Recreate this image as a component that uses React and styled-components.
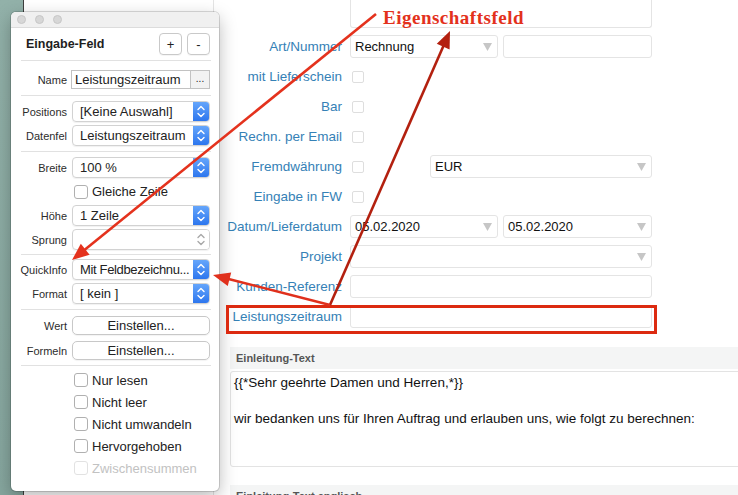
import React from "react";
import styled, { createGlobalStyle } from "styled-components";

const GlobalStyle = createGlobalStyle`
  html, body { margin: 0; padding: 0; }
  body {
    font-family: "Liberation Sans", Arial, sans-serif;
    overflow: hidden;
  }
`;

const Desktop = styled.div`
  position: relative;
  width: 738px;
  height: 495px;
  overflow: hidden;
  display: flex;
  background: linear-gradient(180deg, #92b1a9 0%, #86a69e 100%);
`;

const MainWindow = styled.div`
  margin-left: 23px;
  flex: 1;
  display: flex;
  background: #fff;
  border-left: 1px solid #3e3e3e;
  overflow: hidden;
`;

const Sidebar = styled.div`
  width: 189px;
  flex: none;
  border-right: 1px solid #e4e4e4;
`;

const Content = styled.div`
  flex: 1;
  min-width: 0;
  padding-left: 9px;
`;

const FieldGrid = styled.div`
  display: grid;
  grid-template-columns: 119px 302px;
  grid-template-rows: 28px;
  grid-auto-rows: 23px;
  column-gap: 8px;
  row-gap: 7px;
  align-items: center;
`;

const FieldLabel = styled.div`
  text-align: right;
  white-space: nowrap;
  font-size: 13.5px;
  color: #3581b6;
`;

const Field = styled.div`
  box-sizing: border-box;
  height: ${(p) => (p.$tall ? "28px" : "23px")};
  width: ${(p) => (p.$w ? `${p.$w}px` : "auto")};
  border: 1px solid #e4e4e4;
  border-top: ${(p) => (p.$tall ? "none" : "1px solid #e4e4e4")};
  border-radius: ${(p) => (p.$tall ? "0 0 3px 3px" : "3px")};
  display: flex;
  align-items: center;
  padding: 0 5px 0 4px;
  font-size: 13px;
  color: #111;
  background: #fff;
`;

const FieldText = styled.span`
  flex: 1;
`;

const Pair = styled.div`
  display: grid;
  grid-template-columns: 148px 149px;
  column-gap: 5px;
`;

const InlineRow = styled.div`
  display: flex;
  align-items: center;
  justify-content: space-between;
`;

const SmallCheck = styled.span`
  display: block;
  width: 12px;
  height: 12px;
  margin-left: 2px;
  box-sizing: border-box;
  border: 1px solid #dedede;
  border-radius: 2px;
`;

const Section = styled.section`
  margin: ${(p) => p.$mt}px -20px 0 7px;
`;

const SectionHead = styled.div`
  height: 22px;
  display: flex;
  align-items: center;
  padding-left: 6px;
  background: #f4f5f5;
  font-size: 11px;
  font-weight: bold;
  color: #555;
`;

const TextBox = styled.div`
  box-sizing: border-box;
  margin-top: 2px;
  height: 96px;
  border: 1px solid #e3e3e3;
  border-radius: 3px;
  padding: 2px 3px;
  font-size: 13.5px;
  line-height: 18px;
  color: #111;
`;

/* floating palette */

const Palette = styled.div`
  position: absolute;
  left: 11px;
  top: 12px;
  width: 208px;
  height: 479px;
  display: flex;
  flex-direction: column;
  background: #fff;
  border-radius: 5px;
  overflow: hidden;
  box-shadow: 0 0 0 1px rgba(0, 0, 0, 0.14), 0 6px 18px rgba(0, 0, 0, 0.28);
  color: #222;
`;

const TitleBar = styled.div`
  height: 15px;
  flex: none;
  display: flex;
  align-items: center;
  gap: 9px;
  padding-left: 6px;
  background: #f0f0f0;
  border-bottom: 1px solid #dcdcdc;
`;

const Light = styled.span`
  width: 9px;
  height: 9px;
  box-sizing: border-box;
  border-radius: 50%;
  background: #d7d7d7;
  border: 1px solid #c6c6c6;
`;

const PaletteHead = styled.div`
  height: 32px;
  flex: none;
  display: flex;
  align-items: center;
  padding: 0 9px 0 15px;
`;

const PaletteTitle = styled.div`
  font-size: 12.5px;
  font-weight: bold;
  color: #1e1e1e;
`;

const HeadButtons = styled.div`
  margin-left: auto;
  display: flex;
  gap: 5px;
`;

const SquareButton = styled.div`
  width: 23px;
  height: 22px;
  box-sizing: border-box;
  border: 1px solid #c9c9c9;
  border-radius: 4px;
  display: flex;
  align-items: center;
  justify-content: center;
  font-size: 13px;
  color: #222;
  box-shadow: 0 1px 0 rgba(0, 0, 0, 0.04);
`;

const Divider = styled.div`
  height: 1px;
  flex: none;
  margin: 0 8px 0 10px;
  background: #e1e1e1;
`;

const Group = styled.div`
  display: flex;
  flex-direction: column;
  gap: ${(p) => p.$gap || 0}px;
  padding: ${(p) => p.$pt}px 0 ${(p) => p.$pb}px;
`;

const PropRow = styled.div`
  display: grid;
  grid-template-columns: 56px 1fr;
  column-gap: 5px;
  padding-right: 9px;
  height: ${(p) => p.$h}px;
  align-items: center;
`;

const PropLabel = styled.div`
  text-align: right;
  font-size: 11px;
  color: #2c2c2c;
`;

const NameField = styled.div`
  display: flex;
  height: 19px;
  margin-left: -1px;
`;

const NameInput = styled.div`
  flex: 1;
  box-sizing: border-box;
  border: 1px solid #c2c2c2;
  padding-left: 3px;
  display: flex;
  align-items: center;
  font-size: 13px;
`;

const MoreButton = styled.div`
  width: 19px;
  box-sizing: border-box;
  border: 1px solid #c2c2c2;
  border-left: none;
  background: #f2f2f2;
  display: flex;
  align-items: center;
  justify-content: center;
  font-size: 10px;
  padding-bottom: 3px;
`;

const Popup = styled.div`
  height: 21px;
  box-sizing: border-box;
  display: flex;
  align-items: stretch;
  border: 1px solid #d2d2d2;
  border-radius: 4px;
  box-shadow: 0 1px 1px rgba(0, 0, 0, 0.06);
  overflow: hidden;
`;

const PopupText = styled.div`
  flex: 1;
  min-width: 0;
  display: flex;
  align-items: center;
  padding-left: 7px;
  font-size: 13px;
  letter-spacing: ${(p) => (p.$tight ? "-0.35px" : "0")};
  white-space: nowrap;
  overflow: hidden;
`;

const Stepper = styled.div`
  width: 16px;
  flex: none;
  display: flex;
  align-items: center;
  justify-content: center;
  background: ${(p) =>
    p.$disabled ? "#fff" : "linear-gradient(180deg, #65a6fb 0%, #2d76ee 100%)"};
`;

const PushButton = styled.div`
  height: 19px;
  box-sizing: border-box;
  border: 1px solid #c8c8c8;
  border-radius: 5px;
  display: flex;
  align-items: center;
  justify-content: center;
  font-size: 13px;
  box-shadow: 0 1px 1px rgba(0, 0, 0, 0.05);
`;

const CheckLine = styled.div`
  display: flex;
  align-items: center;
  gap: 4px;
  margin-left: 2px;
  font-size: 13px;
  color: ${(p) => (p.$disabled ? "#c2c2c2" : "#222")};
`;

const CheckBox = styled.span`
  width: 14px;
  height: 14px;
  box-sizing: border-box;
  border: 1px solid ${(p) => (p.$disabled ? "#e2e2e2" : "#b0b0b0")};
  border-radius: 3px;
  background: #fff;
`;

/* annotation layer */

const Overlay = styled.svg`
  position: absolute;
  left: 0;
  top: 0;
  pointer-events: none;
`;

const Callout = styled.div`
  position: absolute;
  left: 383px;
  top: 8px;
  font-family: "Liberation Serif", "Times New Roman", serif;
  font-weight: bold;
  font-size: 19px;
  line-height: 19px;
  letter-spacing: 0.5px;
  color: #e3311c;
`;

const Triangle = () => (
  <svg width="9" height="8" viewBox="0 0 9 8">
    <polygon points="0,0 9,0 4.5,8" fill="#c6c6c6" />
  </svg>
);

const Chevrons = ({ color }) => (
  <svg width="8" height="13" viewBox="0 0 8 13" fill="none" stroke={color} strokeWidth="1.4" strokeLinecap="round" strokeLinejoin="round">
    <polyline points="1,4.5 4,1.5 7,4.5" />
    <polyline points="1,8.5 4,11.5 7,8.5" />
  </svg>
);

const Select = ({ children, w }) => (
  <Field $w={w}>
    <FieldText>{children}</FieldText>
    <Triangle />
  </Field>
);

const PopupField = ({ children, disabled, tight }) => (
  <Popup>
    <PopupText $tight={tight}>{children}</PopupText>
    <Stepper $disabled={disabled}>
      <Chevrons color={disabled ? "#a8a8a8" : "#fff"} />
    </Stepper>
  </Popup>
);

const Arrow = ({ from, to, color, head = 17, half = 7, width = 2.6 }) => {
  const dx = to[0] - from[0];
  const dy = to[1] - from[1];
  const len = Math.hypot(dx, dy);
  const ux = dx / len;
  const uy = dy / len;
  const bx = to[0] - ux * head;
  const by = to[1] - uy * head;
  const pts = [
    to,
    [bx - uy * half, by + ux * half],
    [bx + uy * half, by - ux * half],
  ]
    .map((p) => p.join(","))
    .join(" ");
  return (
    <g>
      <line x1={from[0]} y1={from[1]} x2={bx + ux * 3} y2={by + uy * 3} stroke={color} strokeWidth={width} />
      <polygon points={pts} fill={color} />
    </g>
  );
};

const checks = [
  ["Nur lesen"],
  ["Nicht leer"],
  ["Nicht umwandeln"],
  ["Hervorgehoben"],
  ["Zwischensummen", true],
];

const App = () => {
  return (
    <Desktop>
      <GlobalStyle />
      <MainWindow>
        <Sidebar />
        <Content>
          <FieldGrid>
            <span />
            <Field $tall />

            <FieldLabel>Art/Nummer</FieldLabel>
            <Pair>
              <Select>Rechnung</Select>
              <Field />
            </Pair>

            <FieldLabel>mit Lieferschein</FieldLabel>
            <SmallCheck />

            <FieldLabel>Bar</FieldLabel>
            <SmallCheck />

            <FieldLabel>Rechn. per Email</FieldLabel>
            <SmallCheck />

            <FieldLabel>Fremdwährung</FieldLabel>
            <InlineRow>
              <SmallCheck />
              <Select w={222}>EUR</Select>
            </InlineRow>

            <FieldLabel>Eingabe in FW</FieldLabel>
            <SmallCheck />

            <FieldLabel>Datum/Lieferdatum</FieldLabel>
            <Pair>
              <Select>05.02.2020</Select>
              <Select>05.02.2020</Select>
            </Pair>

            <FieldLabel>Projekt</FieldLabel>
            <Select />

            <FieldLabel>Kunden-Referenz</FieldLabel>
            <Field />

            <FieldLabel>Leistungszeitraum</FieldLabel>
            <Field />
          </FieldGrid>

          <Section $mt={19}>
            <SectionHead>Einleitung-Text</SectionHead>
            <TextBox>
              {"{{*Sehr geehrte Damen und Herren,*}}"}
              <br />
              <br />
              wir bedanken uns für Ihren Auftrag und erlauben uns, wie folgt zu berechnen:
            </TextBox>
          </Section>

          <Section $mt={18}>
            <SectionHead>Einleitung-Text englisch</SectionHead>
          </Section>
        </Content>
      </MainWindow>

      <Palette>
        <TitleBar>
          <Light />
          <Light />
          <Light />
        </TitleBar>
        <PaletteHead>
          <PaletteTitle>Eingabe-Feld</PaletteTitle>
          <HeadButtons>
            <SquareButton>+</SquareButton>
            <SquareButton>-</SquareButton>
          </HeadButtons>
        </PaletteHead>
        <Divider />

        <Group $pt={9} $pb={6}>
          <PropRow $h={19}>
            <PropLabel>Name</PropLabel>
            <NameField>
              <NameInput>Leistungszeitraum</NameInput>
              <MoreButton>...</MoreButton>
            </NameField>
          </PropRow>
        </Group>
        <Divider />

        <Group $pt={5} $pb={5} $gap={3}>
          <PropRow $h={21}>
            <PropLabel>Positions</PropLabel>
            <PopupField>[Keine Auswahl]</PopupField>
          </PropRow>
          <PropRow $h={21}>
            <PropLabel>Datenfel</PropLabel>
            <PopupField>Leistungszeitraum</PopupField>
          </PropRow>
        </Group>
        <Divider />

        <Group $pt={5} $pb={4} $gap={3}>
          <PropRow $h={21}>
            <PropLabel>Breite</PropLabel>
            <PopupField>100 %</PopupField>
          </PropRow>
          <PropRow $h={21}>
            <span />
            <CheckLine>
              <CheckBox />
              Gleiche Zeile
            </CheckLine>
          </PropRow>
          <PropRow $h={21}>
            <PropLabel>Höhe</PropLabel>
            <PopupField>1 Zeile</PopupField>
          </PropRow>
          <PropRow $h={21}>
            <PropLabel>Sprung</PropLabel>
            <PopupField disabled />
          </PropRow>
        </Group>
        <Divider />

        <Group $pt={4} $pb={5} $gap={3}>
          <PropRow $h={21}>
            <PropLabel>QuickInfo</PropLabel>
            <PopupField tight>Mit Feldbezeichnu...</PopupField>
          </PropRow>
          <PropRow $h={21}>
            <PropLabel>Format</PropLabel>
            <PopupField>[ kein ]</PopupField>
          </PropRow>
        </Group>
        <Divider />

        <Group $pt={6} $pb={5} $gap={6}>
          <PropRow $h={19}>
            <PropLabel>Wert</PropLabel>
            <PushButton>Einstellen...</PushButton>
          </PropRow>
          <PropRow $h={19}>
            <PropLabel>Formeln</PropLabel>
            <PushButton>Einstellen...</PushButton>
          </PropRow>
        </Group>
        <Divider />

        <Group $pt={3} $pb={0}>
          {checks.map(([label, disabled]) => (
            <PropRow $h={22} key={label}>
              <span />
              <CheckLine $disabled={disabled}>
                <CheckBox $disabled={disabled} />
                {label}
              </CheckLine>
            </PropRow>
          ))}
        </Group>
      </Palette>

      <Overlay width="738" height="495" viewBox="0 0 738 495">
        <rect x="227.5" y="306.5" width="428" height="26" fill="none" stroke="#dc2a10" strokeWidth="3" />
        <Arrow from={[376, 14]} to={[72, 260]} color="#e4321d" />
        <Arrow from={[330, 305]} to={[450, 31]} color="#b3200f" />
        <Arrow from={[330, 305]} to={[213, 275]} color="#e0301c" />
      </Overlay>
      <Callout>Eigenschaftsfeld</Callout>
    </Desktop>
  );
};

export default App;
